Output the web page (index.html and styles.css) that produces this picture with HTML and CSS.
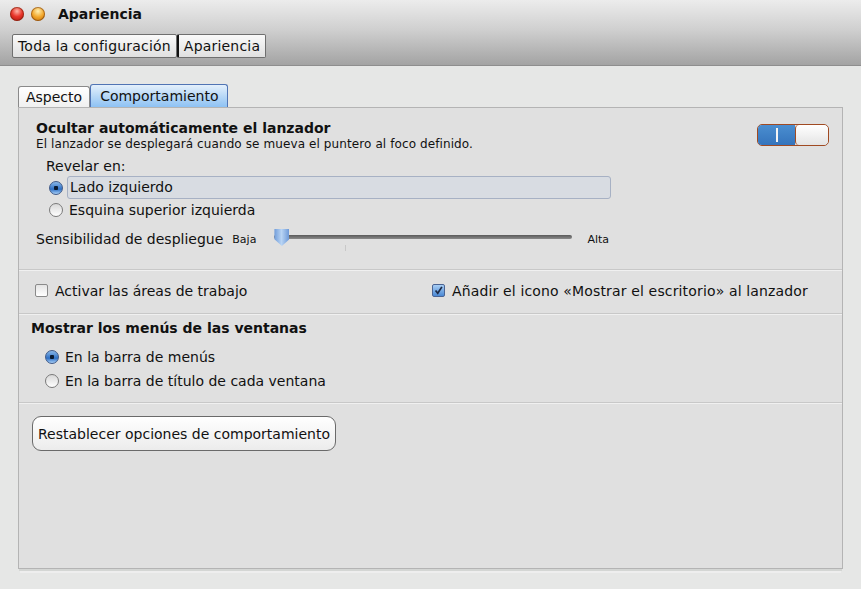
FILE: index.html
```html
<!DOCTYPE html>
<html lang="es">
<head>
<meta charset="utf-8">
<title>Apariencia</title>
<link rel="stylesheet" href="styles.css">
</head>
<body>
<div class="window">
  <header class="titlebar">
    <div class="titlerow">
      <span class="light red"></span>
      <span class="light orange"></span>
      <span class="title">Apariencia</span>
    </div>
    <div class="crumbs">
      <button class="crumb">Toda la configuración</button><button class="crumb">Apariencia</button>
    </div>
  </header>
  <main class="content">
    <div class="tabs">
      <div class="tab">Aspecto</div>
      <div class="tab active">Comportamiento</div>
    </div>
    <section class="panel">
      <div class="sec sec1">
        <div class="headrow">
          <div>
            <div class="heading">Ocultar automáticamente el lanzador</div>
            <div class="sub">El lanzador se desplegará cuando se mueva el puntero al foco definido.</div>
          </div>
          <div class="toggle"><span class="on"><span class="bar"></span></span><span class="knob"></span></div>
        </div>
        <div class="reveal">Revelar en:</div>
        <div class="radio-row hl"><span class="radio sel"></span><span>Lado izquierdo</span></div>
        <div class="radio-row"><span class="radio"></span><span>Esquina superior izquierda</span></div>
        <div class="slider-row">
          <span class="slabel">Sensibilidad de despliegue</span>
          <span class="small">Baja</span>
          <div class="slider"><div class="track"></div><div class="thumb"></div><div class="tick"></div></div>
          <span class="small alta">Alta</span>
        </div>
      </div>
      <div class="sep"></div>
      <div class="sec checks">
        <div class="check-row"><span class="check"></span><span>Activar las áreas de trabajo</span></div>
        <div class="check-row right"><span class="check on"><svg viewBox="0 0 13 13" width="13" height="13"><path d="M3 6.5 L5.6 9.8 L10.5 2.2" fill="none" stroke="#1d2a45" stroke-width="2"/></svg></span><span>Añadir el icono «Mostrar el escritorio» al lanzador</span></div>
      </div>
      <div class="sep"></div>
      <div class="sec sec3">
        <div class="heading h2">Mostrar los menús de las ventanas</div>
        <div class="radio-row r2 first"><span class="radio sel"></span><span>En la barra de menús</span></div>
        <div class="radio-row r2"><span class="radio"></span><span>En la barra de título de cada ventana</span></div>
      </div>
      <div class="sep"></div>
      <div class="sec sec4">
        <button class="reset">Restablecer opciones de comportamiento</button>
      </div>
    </section>
  </main>
</div>
</body>
</html>
```

FILE: styles.css
```css
* { box-sizing: border-box; }
html, body { margin: 0; padding: 0; }
body {
  width: 861px; height: 589px; overflow: hidden;
  background: #e6e7e6;
  font-family: "DejaVu Sans", "Liberation Sans", sans-serif;
  font-size: 13px; color: #111;
}
.window { display: flex; flex-direction: column; height: 589px; }
.titlebar {
  height: 66px;
  background: linear-gradient(#ececec 0%, #d0d0d0 45%, #a3a3a3 100%);
  border-bottom: 1px solid #8e8e8e;
  display: flex; flex-direction: column;
}
.titlerow { display: flex; align-items: center; height: 26px; padding-left: 10px; padding-top: 1px; }
.light { width: 14px; height: 14px; border-radius: 50%; margin-right: 7px; box-shadow: inset 0 0 0 1px rgba(90,30,0,.45); }
.red { background: radial-gradient(circle at 50% 30%, #ffb4a8 0%, #e8352a 45%, #a4100a 100%); }
.orange { background: radial-gradient(circle at 50% 30%, #fff0b0 0%, #f2a528 50%, #b86a08 100%); }
.title { font-weight: bold; font-size: 14px; margin-left: 6px; color: #111; }
.crumbs { display: flex; padding-left: 12px; margin-top: 8px; }
.crumb {
  font: inherit; font-size: 14px; color: #111; letter-spacing: 0.2px;
  height: 24px; padding: 0 5px;
  background: linear-gradient(#fafafa, #e0e0e0);
  border: 1px solid #6f6f6f; border-radius: 2px; margin: 0;
}
.crumb + .crumb { border-left: 2px solid #111; }
.content { padding: 18px 18px 0 18px; display: flex; flex-direction: column; }
.tabs { display: flex; align-items: flex-end; height: 23px; }
.tab {
  height: 21px; padding: 0 7px 0 7px; font-size: 14px; line-height: 20px;
  background: linear-gradient(#ffffff, #f0f0f0);
  border: 1px solid #8a8a8a; border-bottom: none; border-radius: 3px 3px 0 0;
}
.tab.active {
  height: 23px; margin-left: 0; padding: 0 9px; line-height: 22px;
  background: linear-gradient(#e4f0fc 0%, #b4d6f6 55%, #8ec2f4 100%);
  border-color: #5074b4;
}
.panel {
  height: 462px;
  background: #e0e0e0;
  border: 1px solid #b4b4b4;
  box-shadow: 0 3px 0 -1px #d4d6d4, 0 6px 0 -2px #eeeeee;
  display: flex; flex-direction: column;
}
.sec { padding: 0 17px; }
.sec1 { height: 161px; padding-top: 12px; }
.headrow { display: flex; justify-content: space-between; align-items: flex-start; }
.heading { font-weight: bold; font-size: 14px; letter-spacing: 0; line-height: 17px; }
.sub { font-size: 12px; line-height: 14px; letter-spacing: 0.1px; }
.toggle {
  width: 72px; height: 22px; margin-top: 4px; margin-right: -4px;
  border: 1px solid #a04a22; border-radius: 5px; overflow: hidden; display: flex;
}
.toggle .on { width: 37px; background: linear-gradient(#4a8ed0, #3574bc); display: flex; align-items: center; justify-content: center; }
.toggle .bar { width: 2px; height: 14px; background: #f4f4f4; margin-left: 0; }
.toggle .knob { flex: 1; background: linear-gradient(#ffffff, #e4e4e4); border-left: 1px solid #a04a22; border-radius: 4px; }
.reveal { margin-left: 10px; margin-top: 7px; font-size: 14px; line-height: 17px; }
.radio-row { display: flex; align-items: center; height: 23px; margin-left: 13px; font-size: 14px; gap: 6px; }
.radio-row.hl { width: 562px; margin-top: 1px; }
.radio-row.hl span:last-child {
  flex: 1; height: 23px; line-height: 21px; padding-left: 2px;
  background: #d8dce2; border: 1px solid #a7b1c4; border-radius: 3px; margin-left: -2px;
}
.radio-row.hl + .radio-row { height: 22px; }
.radio {
  width: 14px; height: 14px; border-radius: 50%; flex: none;
  background: linear-gradient(#d8d8d8, #ffffff);
  border: 1px solid #7a7a7a;
}
.radio.sel {
  background: radial-gradient(circle, #0a1a30 0 2px, transparent 2.5px), linear-gradient(#8ab8e8, #2e6fc4 60%, #a8d0f8);
  border-color: #405a88;
}
.slider-row { display: flex; align-items: center; margin-top: 6px; height: 24px; }
.slabel { font-size: 14px; }
.small { font-size: 11px; margin-left: 9px; }
.alta { margin-left: 15px; }
.slider { position: relative; width: 298px; height: 24px; margin-left: 18px; }
.track { position: absolute; left: 0; right: 0; top: 8px; height: 4px; background: linear-gradient(#5a5a5a, #8a8a8a); border-radius: 2px; }
.thumb {
  position: absolute; left: 0; top: 2px; width: 15px; height: 17px;
  background: linear-gradient(90deg, #6e9ad8, #b8d4f4 50%, #6e9ad8);
  clip-path: polygon(0 0, 100% 0, 100% 60%, 50% 100%, 0 60%);
}
.tick { position: absolute; left: 71px; top: 18px; width: 1px; height: 6px; background: #c8c8c8; }
.sep { height: 2px; border-top: 1px solid #c8c8c8; border-bottom: 1px solid #f0f0f0; }
.checks { display: flex; justify-content: space-between; align-items: center; height: 42px; padding-left: 16px; padding-right: 34px; padding-bottom: 3px; }
.check-row { display: flex; align-items: center; gap: 7px; font-size: 14px; }
.check-row.right { letter-spacing: 0.15px; }
.check {
  width: 13px; height: 13px; flex: none; border: 1px solid #8a8a8a; border-radius: 2px;
  background: linear-gradient(#e4e4e4, #ffffff);
  display: flex; align-items: center; justify-content: center;
}
.check.on { background: linear-gradient(#a8cef4, #4a88d4); border-color: #4a6494; overflow: visible; }
.check svg { display: block; }
.sec3 { height: 87px; padding-left: 12px; padding-top: 5px; }
.h2 { letter-spacing: 0; }
.radio-row.r2 { margin-left: 14px; height: 24px; }
.radio-row.first { margin-top: 8px; }
.sec4 { padding-top: 12px; padding-left: 13px; }
.reset {
  font: inherit; font-size: 14px; color: #111;
  height: 35px; padding: 0 5px 0 5px; width: 304px;
  background: linear-gradient(#ffffff, #ececec);
  border: 1px solid #6a6a6a; border-radius: 9px;
}
```
